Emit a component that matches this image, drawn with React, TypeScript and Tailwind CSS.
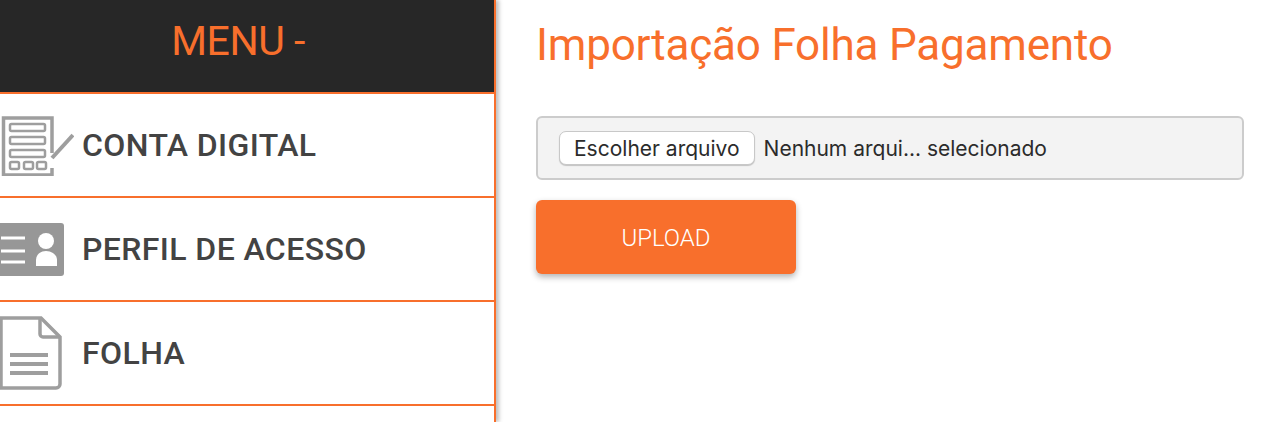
import React from 'react';

function ContaIcon() {
  return (
    <svg width="74" height="62" viewBox="0 0 74 62" fill="none" stroke="#9e9e9e" strokeWidth="2.5" className="blur-[0.5px]">
      <path d="M52 39V4H3.5v57H52v-7" strokeWidth="3.5" />
      <rect x="10" y="10" width="35" height="7" rx="1.5" />
      <rect x="10" y="23" width="35" height="7" rx="1.5" />
      <rect x="10" y="36" width="35" height="7" rx="1.5" />
      <rect x="10" y="48" width="9" height="7" rx="1.5" />
      <rect x="24" y="48" width="9" height="7" rx="1.5" />
      <rect x="37" y="48" width="9" height="7" rx="1.5" />
      <path d="M52 44L73 21" strokeWidth="4" />
    </svg>
  );
}

function PerfilIcon() {
  return (
    <svg width="64" height="54" viewBox="0 0 64 54" className="blur-[0.5px]">
      <path d="M0 1h61a3 3 0 0 1 3 3v47a3 3 0 0 1-3 3H0z" fill="#979797" />
      <path d="M1 16h24M1 29h24M1 40h24" stroke="#fff" strokeWidth="3" />
      <circle cx="46" cy="19" r="8" fill="#fff" />
      <path d="M36 44v-6c0-5 4-9 10-9s11 4 11 9v6z" fill="#fff" />
    </svg>
  );
}

function FolhaIcon() {
  return (
    <svg width="62" height="74" viewBox="0 0 62 74" fill="none" stroke="#9e9e9e" strokeWidth="3.5" className="blur-[0.5px]">
      <path d="M1 2h40l19 19v47a4 4 0 0 1-4 4H1z" />
      <path d="M40 2v16a3 3 0 0 0 3 3h17" />
      <path d="M10 39h38M10 48h38M10 57h38" strokeWidth="4" />
    </svg>
  );
}

const items = [
  { label: 'CONTA DIGITAL', icon: <ContaIcon /> },
  { label: 'PERFIL DE ACESSO', icon: <PerfilIcon /> },
  { label: 'FOLHA', icon: <FolhaIcon /> },
];

export default function App() {
  return (
    <div className="flex h-[422px] w-[1272px] overflow-hidden bg-white font-['Roboto',sans-serif]">
      {/* Menu lateral */}
      <aside className="w-[496px] shrink-0 border-r-2 border-[#f86f2c] shadow-[3px_0_4px_rgba(0,0,0,0.25)]">
        <div className="flex h-[94px] items-center justify-center border-b-2 border-[#f86f2c] bg-[#272727] pb-[8px] pr-[18px] text-[41px] font-normal tracking-[-0.5px] text-[#f86f2c]">
          MENU -
        </div>
        {items.map((item) => (
          <div key={item.label} className="flex h-[104px] items-center border-b-2 border-[#f86f2c]">
            <div className="flex w-[82px] shrink-0 items-center">{item.icon}</div>
            <span className="text-[32px] font-medium tracking-[0.4px] text-[#434343]">{item.label}</span>
          </div>
        ))}
      </aside>

      {/* Conteúdo */}
      <main className="flex-1 pl-[40px] pr-[28px]">
        <h1 className="mt-[17px] text-[44px] font-normal leading-[56px] tracking-[-0.2px] text-[#f86f2c]">Importação Folha Pagamento</h1>
        <div className="mt-[43px] flex h-[64px] items-center rounded-[6px] border-2 border-[#cccccc] bg-[#f3f3f3] pl-[21px] font-['Inter',sans-serif] text-[21px] text-[#2b2b2b]">
          <span className="flex h-[34px] items-center rounded-[7px] border border-[#c8c8c8] bg-white px-[14px] pt-[1px] shadow-[0_1px_1px_rgba(0,0,0,0.2)]">Escolher arquivo</span>
          <span className="ml-[9px] pt-[1px]">Nenhum arqui... selecionado</span>
        </div>
        <button className="mt-[20px] flex h-[74px] w-[260px] items-center justify-center rounded-[6px] bg-[#f86f2c] pt-[2px] text-[24px] font-light text-white shadow-[0_3px_6px_rgba(0,0,0,0.3)]">
          UPLOAD
        </button>
      </main>
    </div>
  );
}
